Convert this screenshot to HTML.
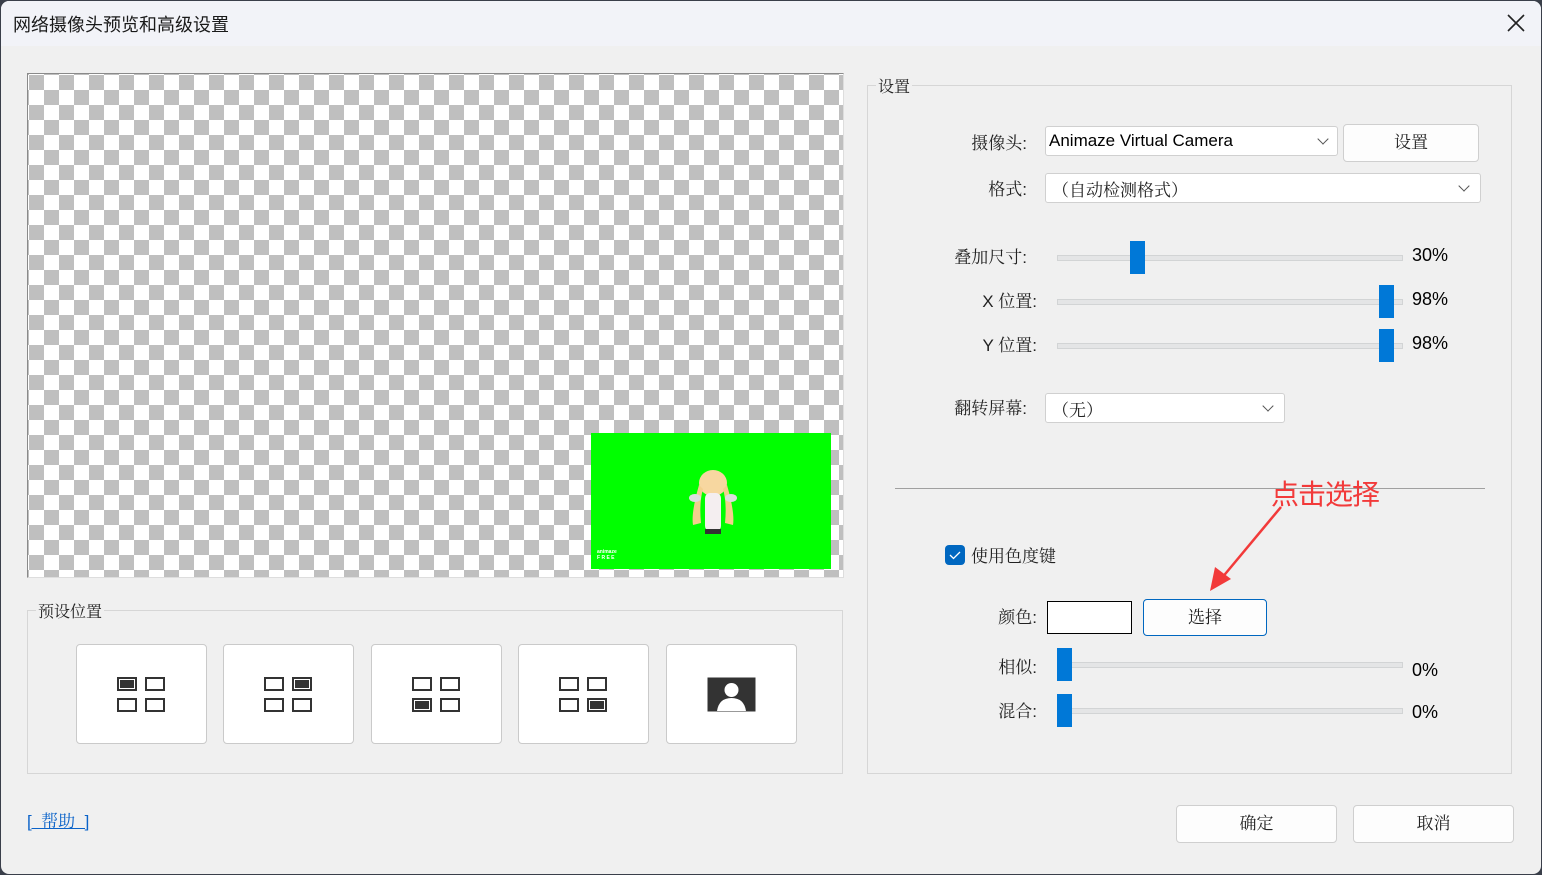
<!DOCTYPE html>
<html><head><meta charset="utf-8"><style>
*{margin:0;padding:0;box-sizing:border-box}
body{width:1542px;height:875px;background:#3a3f4a;position:relative;overflow:hidden;font-family:"Liberation Sans","Noto Serif CJK SC",serif;font-size:16px;color:#222}
.a{position:absolute}
.win{left:1px;top:1px;width:1540px;height:873px;background:#f0f0f0;border-radius:8px;overflow:hidden}
.title{left:0;top:0;width:1540px;height:45px;background:#f2f3f8}
.sans{font-family:"Liberation Sans","Noto Sans CJK SC",sans-serif}
.serif{font-family:"Liberation Sans","Noto Serif CJK SC",serif}
.grp{border:1px solid #d6d6d6}
.leg{background:#f0f0f0;padding:0 2px;font-size:16px}
.btn{background:#fdfdfd;border:1px solid #cfcfcf;border-radius:4px;text-align:center}
.pb{background:#fff;border:1px solid #cacaca;border-radius:4px;width:131px;height:100px;top:643px}
.cell{position:absolute;width:20px;height:14px;border:2px solid #333;background:#fff}
.cell.f{background:#333;box-shadow:inset 0 0 0 1px #fff}
.sel{background:#fff;border:1px solid #d0d0d0;border-radius:3px}
.trk{height:6px;background:#e4e5e6;border:1px solid #d2d4d5}
.th{width:15px;height:33px;background:#0078d7}
.chev{width:8px;height:8px;border-right:1.3px solid #555;border-bottom:1.3px solid #555;transform:rotate(45deg)}
.lbl{font-size:17px;text-align:right}
.pct{font-size:18px;color:#000}
</style></head><body>
<div class="a win">
<div class="a title"></div>
<div class="a sans" style="left:12px;top:10px;font-size:18px;color:#1a1a1a">网络摄像头预览和高级设置</div>
<svg class="a" style="left:1505px;top:12px" width="20" height="20"><path d="M2 2L18 18M18 2L2 18" stroke="#222" stroke-width="1.6"/></svg>

<div class="a" style="left:26px;top:72px;width:817px;height:505px;border:1px solid #8a8a8a;border-right-color:#ddd;border-bottom-color:#ddd;background-color:#fff;background-image:conic-gradient(#fff 25%,#bfbfbf 0 50%,#fff 0 75%,#bfbfbf 0);background-size:30px 30px;background-position:1px 1px"></div>
<div class="a" style="left:590px;top:432px;width:240px;height:136px;background:#00ff00"></div>
<svg class="a" style="left:680px;top:462px" width="64" height="76">
<ellipse cx="32" cy="20" rx="14" ry="13" fill="#f7d7a0"/>
<path d="M18 22 Q10 50 12 62 L20 60 Q18 40 22 26Z M46 22 Q54 50 52 62 L44 60 Q46 40 42 26Z" fill="#f3cf8d"/>
<rect x="24" y="30" width="16" height="38" rx="5" fill="#f4eef0"/>
<ellipse cx="14" cy="35" rx="6" ry="4" fill="#ddd"/><ellipse cx="50" cy="35" rx="6" ry="4" fill="#ddd"/>
<rect x="24" y="66" width="16" height="5" fill="#333"/>
</svg>
<div class="a sans" style="left:596px;top:548px;font-size:5px;color:#fff;font-weight:bold">animaze<br>F R E E</div>

<div class="a grp" style="left:26px;top:609px;width:816px;height:164px"></div>
<div class="a leg serif" style="left:35px;top:598px">预设位置</div>
<div class="a pb" style="left:75px"><div class="cell f" style="left:40px;top:32px"></div><div class="cell" style="left:68px;top:32px"></div><div class="cell" style="left:40px;top:53px"></div><div class="cell" style="left:68px;top:53px"></div></div>
<div class="a pb" style="left:222px"><div class="cell" style="left:40px;top:32px"></div><div class="cell f" style="left:68px;top:32px"></div><div class="cell" style="left:40px;top:53px"></div><div class="cell" style="left:68px;top:53px"></div></div>
<div class="a pb" style="left:370px"><div class="cell" style="left:40px;top:32px"></div><div class="cell" style="left:68px;top:32px"></div><div class="cell f" style="left:40px;top:53px"></div><div class="cell" style="left:68px;top:53px"></div></div>
<div class="a pb" style="left:517px"><div class="cell" style="left:40px;top:32px"></div><div class="cell" style="left:68px;top:32px"></div><div class="cell" style="left:40px;top:53px"></div><div class="cell f" style="left:68px;top:53px"></div></div>
<div class="a pb" style="left:665px"><svg class="a" style="left:40px;top:32px" width="49" height="35"><rect x="1" y="1" width="47" height="33" fill="#333" stroke="#333"/><circle cx="24.5" cy="13" r="7" fill="#fff"/><path d="M10 34 Q12 21 24.5 21 Q37 21 39 34Z" fill="#fff"/></svg></div>

<div class="a serif" style="left:26px;top:806px;color:#0b63c9;font-size:17px;text-decoration:underline;white-space:pre">[  帮助  ]</div>

<div class="a grp" style="left:866px;top:84px;width:645px;height:689px"></div>
<div class="a leg serif" style="left:875px;top:73px">设置</div>

<div class="a lbl serif" style="left:930px;top:128px;width:96px">摄像头:</div>
<div class="a sel sans" style="left:1044px;top:125px;width:293px;height:30px;font-size:17px;padding:4px 3px;color:#000">Animaze Virtual Camera<div class="a chev" style="right:10px;top:8px"></div></div>
<div class="a btn serif" style="left:1342px;top:123px;width:136px;height:38px;line-height:36px;font-size:17px">设置</div>
<div class="a lbl serif" style="left:930px;top:174px;width:96px">格式:</div>
<div class="a sel serif" style="left:1044px;top:172px;width:436px;height:30px;font-size:17px;padding:2px 6px">（自动检测格式）<div class="a chev" style="right:12px;top:8px"></div></div>

<div class="a lbl serif" style="left:930px;top:242px;width:96px">叠加尺寸:</div>
<div class="a trk" style="left:1056px;top:254px;width:346px"></div><div class="a th" style="left:1129px;top:240px"></div>
<div class="a sans pct" style="left:1411px;top:244px">30%</div>
<div class="a lbl serif" style="left:940px;top:286px;width:96px">X 位置:</div>
<div class="a trk" style="left:1056px;top:298px;width:346px"></div><div class="a th" style="left:1378px;top:284px"></div>
<div class="a sans pct" style="left:1411px;top:288px">98%</div>
<div class="a lbl serif" style="left:940px;top:330px;width:96px">Y 位置:</div>
<div class="a trk" style="left:1056px;top:342px;width:346px"></div><div class="a th" style="left:1378px;top:328px"></div>
<div class="a sans pct" style="left:1411px;top:332px">98%</div>

<div class="a lbl serif" style="left:930px;top:393px;width:96px">翻转屏幕:</div>
<div class="a sel serif" style="left:1044px;top:392px;width:240px;height:30px;font-size:17px;padding:2px 6px">（无）<div class="a chev" style="right:12px;top:8px"></div></div>

<div class="a" style="left:894px;top:487px;width:590px;height:1px;background:#a0a0a0"></div>
<div class="a sans" style="left:1270px;top:472px;font-size:28px;color:#f23a3a;letter-spacing:-1px">点击选择</div>
<svg class="a" style="left:1200px;top:500px" width="90" height="95"><path d="M80 6 L20 78" stroke="#f23a3a" stroke-width="2.5"/><path d="M9 90 L14 66 L30 78Z" fill="#f23a3a"/></svg>

<div class="a" style="left:944px;top:544px;width:20px;height:20px;background:#0067c0;border-radius:4px"><svg width="20" height="20"><path d="M5 10l3.5 3.5L15 7" stroke="#fff" stroke-width="1.3" fill="none"/></svg></div>
<div class="a serif" style="left:970px;top:541px;font-size:17px">使用色度键</div>

<div class="a lbl serif" style="left:940px;top:602px;width:96px">颜色:</div>
<div class="a" style="left:1046px;top:600px;width:85px;height:33px;background:#fff;border:1px solid #000"></div>
<div class="a btn serif" style="left:1142px;top:598px;width:124px;height:37px;line-height:35px;font-size:17px;border-color:#0067c0">选择</div>
<div class="a lbl serif" style="left:940px;top:652px;width:96px">相似:</div>
<div class="a trk" style="left:1060px;top:661px;width:342px"></div><div class="a th" style="left:1056px;top:647px"></div>
<div class="a sans pct" style="left:1411px;top:659px">0%</div>
<div class="a lbl serif" style="left:940px;top:696px;width:96px">混合:</div>
<div class="a trk" style="left:1060px;top:707px;width:342px"></div><div class="a th" style="left:1056px;top:693px"></div>
<div class="a sans pct" style="left:1411px;top:701px">0%</div>

<div class="a btn serif" style="left:1175px;top:804px;width:161px;height:38px;line-height:36px;font-size:17px">确定</div>
<div class="a btn serif" style="left:1352px;top:804px;width:161px;height:38px;line-height:36px;font-size:17px">取消</div>
</div>
</body></html>
